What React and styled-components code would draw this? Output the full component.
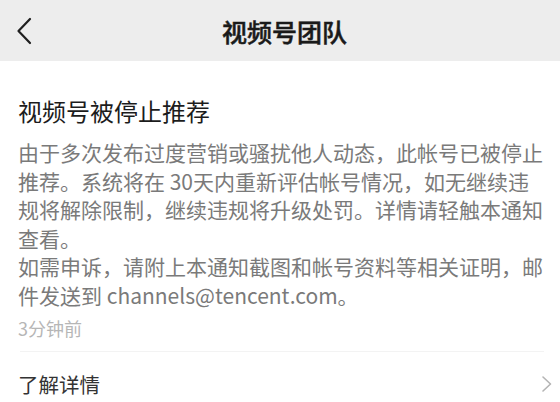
import styled, { createGlobalStyle } from "styled-components";

const GlobalStyle = createGlobalStyle`
  html, body {
    margin: 0;
    padding: 0;
    background: #ffffff;
  }
  body {
    font-family: "Noto Sans CJK SC", "Noto Sans", "Liberation Sans", sans-serif;
    -webkit-font-smoothing: antialiased;
  }
`;

const BackIcon = () => (
  <svg width="16" height="28" viewBox="0 0 16 28" fill="none">
    <path d="M14 2 L2.5 14 L14 26" stroke="#1f1f1f" strokeWidth="2.2" strokeLinecap="round" strokeLinejoin="round" />
  </svg>
);

const ChevronIcon = () => (
  <svg width="12" height="18" viewBox="0 0 12 18" fill="none">
    <path d="M2 2 L9.5 9 L2 16" stroke="#b4b4b4" strokeWidth="1.6" strokeLinecap="round" strokeLinejoin="round" />
  </svg>
);

const App = () => {
  return (
    <>
      <GlobalStyle />
      <Page>
        <Header>
          <BackButton>
            <BackIcon />
          </BackButton>
          <HeaderTitle>视频号团队</HeaderTitle>
          <span />
        </Header>

        <Content>
          <Headline>视频号被停止推荐</Headline>
          <Body>
            <p>由于多次发布过度营销或骚扰他人动态，此帐号已被停止推荐。系统将在 30天内重新评估帐号情况，如无继续违规将解除限制，继续违规将升级处罚。详情请轻触本通知查看。</p>
            <p>如需申诉，请附上本通知截图和帐号资料等相关证明，邮件发送到 channels@tencent.com。</p>
          </Body>
          <Time>3分钟前</Time>
        </Content>

        <Divider />

        <LinkRow>
          <LinkText>了解详情</LinkText>
          <ChevronIcon />
        </LinkRow>
      </Page>
    </>
  );
};

const Page = styled.div`
  width: 560px;
  height: 402px;
  overflow: hidden;
  background: #ffffff;
`;

const Header = styled.header`
  height: 61px;
  background: #ededed;
  display: grid;
  grid-template-columns: 1fr auto 1fr;
  align-items: center;
`;

const BackButton = styled.div`
  display: flex;
  align-items: center;
  padding-left: 16px;
`;

const HeaderTitle = styled.h1`
  margin: 0 0 0 9px;
  font-size: 25px;
  line-height: 32px;
  font-weight: 500;
  color: #1a1a1a;
  -webkit-text-stroke: 0.5px #1a1a1a;
`;

const Content = styled.div`
  padding: 0 12px 0 18px;
`;

const Headline = styled.h2`
  margin: 34px 0 0;
  font-size: 24px;
  line-height: 32px;
  font-weight: 400;
  color: #1c1c1c;
`;

const Body = styled.div`
  margin-top: 11px;
  font-size: 21px;
  line-height: 28.5px;
  color: #7a7a7a;

  p {
    margin: 0;
  }
`;

const Time = styled.div`
  margin-top: 9px;
  font-size: 18px;
  line-height: 20px;
  color: #b6b6b6;
`;

const Divider = styled.div`
  margin: 13px 16px 0 20px;
  height: 1px;
  background: #f3f3f3;
`;

const LinkRow = styled.div`
  display: flex;
  align-items: center;
  justify-content: space-between;
  padding: 17px 7px 0 18px;
`;

const LinkText = styled.span`
  font-size: 20.5px;
  line-height: 30px;
  color: #333333;
`;

export default App;
